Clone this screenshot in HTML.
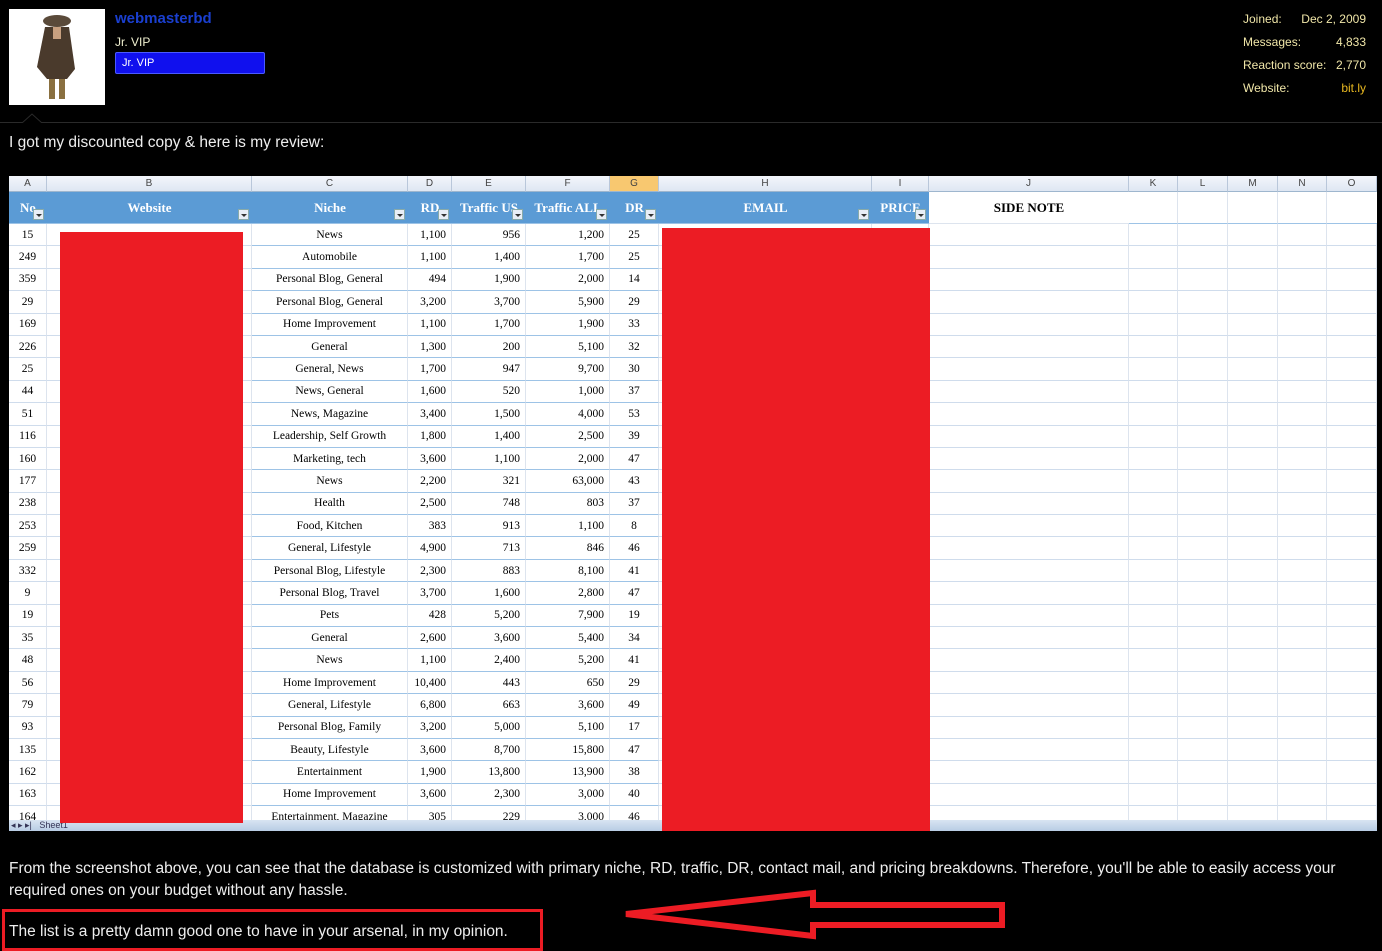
<!DOCTYPE html>
<html><head><meta charset="utf-8"><style>
*{margin:0;padding:0;box-sizing:border-box}
body{width:1382px;height:949px;background:#000;position:relative;overflow:hidden;font-family:"Liberation Sans",sans-serif;color:#fff}
.abs{position:absolute}
.stats{font-size:12px;color:#f0e6a8;line-height:23px}
#sheet{left:9px;top:176px;width:1368px;height:655px;background:#fff;overflow:hidden}
.r{display:flex;height:22.4px}
.r>div{border-right:1px solid #dde4ee;border-bottom:1px solid #cfdcec;font-family:"Liberation Serif",serif;font-size:11.5px;color:#000;display:flex;align-items:center;white-space:nowrap;overflow:hidden}
.c{justify-content:center}.rt{justify-content:flex-end;padding-right:5px}
.ch{display:flex;height:16px;background:linear-gradient(#f3f6fb,#dde6f2)}
.ch>div{border-right:1px solid #b9c7da;border-bottom:1px solid #9eb6ce;font-size:10px;color:#444;display:flex;align-items:center;justify-content:center}
.hd{display:flex;height:32px}
.hd>div{background:#5b9bd5;color:#fff;font-family:"Liberation Serif",serif;font-weight:bold;font-size:13px;display:flex;align-items:center;justify-content:center;position:relative;border-bottom:1px solid #9dc3e6}
.dd{position:absolute;right:3px;bottom:3px;width:11px;height:11px;background:#e8eef6;border:1px solid #8aa;}
.dd:after{content:"";position:absolute;left:2px;top:4px;border:3px solid transparent;border-top:3px solid #333}
.txt{font-size:15.5px;color:#eee}
</style></head><body>
<div class="abs" style="left:9px;top:9px;width:96px;height:96px;background:#fff">
<svg width="96" height="96"><ellipse cx="48" cy="12" rx="14" ry="6" fill="#5a4a3a"/><path d="M36 18 L60 18 L66 60 L58 70 L38 70 L28 58 Z" fill="#4a3a2c"/><path d="M40 70 L46 70 L46 90 L40 90Z M50 70 L56 70 L56 90 L50 90Z" fill="#8a7040"/><path d="M44 18 L52 18 L52 30 L44 30Z" fill="#c8a080"/></svg></div>
<div class="abs" style="left:115px;top:10px;font-size:15px;font-weight:bold;color:#1a3fd0">webmasterbd</div>
<div class="abs" style="left:115px;top:35px;font-size:12px;color:#f0f0d0">Jr. VIP</div>
<div class="abs" style="left:115px;top:52px;width:150px;height:22px;background:#1010ee;border:1px solid #4a5aff;border-radius:2px;font-size:11px;color:#fff;padding:4px 0 0 6px">Jr. VIP</div>
<div class="abs stats" style="left:1243px;top:8px">Joined:<br>Messages:<br>Reaction score:<br>Website:</div>
<div class="abs stats" style="right:16px;top:8px;text-align:right">Dec 2, 2009<br>4,833<br>2,770<br><span style="color:#e8b820">bit.ly</span></div>
<div class="abs" style="left:0;top:122px;width:1382px;height:1px;background:#2a2a2a"></div>
<svg class="abs" style="left:22px;top:112px" width="20" height="11"><path d="M0 11 L10 2 L20 11" fill="#000" stroke="#2a2a2a"/></svg>
<div class="abs txt" style="left:9px;top:134px">I got my discounted copy &amp; here is my review:</div>

<div id="sheet" class="abs">
<div class="ch"><div style="width:38px">A</div><div style="width:205px">B</div><div style="width:156px">C</div><div style="width:44px">D</div><div style="width:74px">E</div><div style="width:84px">F</div><div style="width:49px;background:#f8c870">G</div><div style="width:213px">H</div><div style="width:57px">I</div><div style="width:200px">J</div><div style="width:49px">K</div><div style="width:50px">L</div><div style="width:50px">M</div><div style="width:49px">N</div><div style="width:50px">O</div></div>
<div class="hd"><div style="width:38px">No<span class="dd"></span></div><div style="width:205px">Website<span class="dd"></span></div><div style="width:156px">Niche<span class="dd"></span></div><div style="width:44px">RD<span class="dd"></span></div><div style="width:74px">Traffic US<span class="dd"></span></div><div style="width:84px">Traffic ALL<span class="dd"></span></div><div style="width:49px">DR<span class="dd"></span></div><div style="width:213px">EMAIL<span class="dd"></span></div><div style="width:57px">PRICE<span class="dd"></span></div><div style="width:200px;background:#fff;color:#000;border-bottom:1px solid #dde4ee">SIDE NOTE</div><div style="width:49px;background:#fff;border-right:1px solid #dde4ee"></div><div style="width:50px;background:#fff;border-right:1px solid #dde4ee"></div><div style="width:50px;background:#fff;border-right:1px solid #dde4ee"></div><div style="width:49px;background:#fff;border-right:1px solid #dde4ee"></div><div style="width:50px;background:#fff"></div></div>
<div id="rows"></div>
<div class="abs" style="left:0;top:644px;width:1368px;height:11px;background:linear-gradient(#d8e4f2,#b8cce4);font-size:9px;color:#335;padding-left:2px">◂ ▸ ▸|&nbsp;&nbsp;&nbsp;Sheet1</div>
<div class="abs" style="left:51px;top:56px;width:183px;height:591px;background:#ec1c24"></div>
<div class="abs" style="left:653px;top:52px;width:268px;height:603px;background:#ec1c24"></div>
</div>

<div class="abs txt" style="left:9px;top:858px;line-height:22px;width:1360px">From the screenshot above, you can see that the database is customized with primary niche, RD, traffic, DR, contact mail, and pricing breakdowns. Therefore, you'll be able to easily access your required ones on your budget without any hassle.</div>
<div class="abs txt" style="left:9px;top:923px">The list is a pretty damn good one to have in your arsenal, in my opinion.</div>
<div class="abs" style="left:2px;top:909px;width:541px;height:42px;border:3px solid #ec1c24"></div>
<svg class="abs" style="left:0;top:0" width="1382" height="949"><polygon points="626,914 813,893 813,905 1002,905 1002,925 813,925 813,936" fill="none" stroke="#ec1c24" stroke-width="6" stroke-linejoin="miter"/></svg>

<script>
var d=[["15","News","1,100","956","1,200","25"],["249","Automobile","1,100","1,400","1,700","25"],["359","Personal Blog, General","494","1,900","2,000","14"],["29","Personal Blog, General","3,200","3,700","5,900","29"],["169","Home Improvement","1,100","1,700","1,900","33"],["226","General","1,300","200","5,100","32"],["25","General, News","1,700","947","9,700","30"],["44","News, General","1,600","520","1,000","37"],["51","News, Magazine","3,400","1,500","4,000","53"],["116","Leadership, Self Growth","1,800","1,400","2,500","39"],["160","Marketing, tech","3,600","1,100","2,000","47"],["177","News","2,200","321","63,000","43"],["238","Health","2,500","748","803","37"],["253","Food, Kitchen","383","913","1,100","8"],["259","General, Lifestyle","4,900","713","846","46"],["332","Personal Blog, Lifestyle","2,300","883","8,100","41"],["9","Personal Blog, Travel","3,700","1,600","2,800","47"],["19","Pets","428","5,200","7,900","19"],["35","General","2,600","3,600","5,400","34"],["48","News","1,100","2,400","5,200","41"],["56","Home Improvement","10,400","443","650","29"],["79","General, Lifestyle","6,800","663","3,600","49"],["93","Personal Blog, Family","3,200","5,000","5,100","17"],["135","Beauty, Lifestyle","3,600","8,700","15,800","47"],["162","Entertainment","1,900","13,800","13,900","38"],["163","Home Improvement","3,600","2,300","3,000","40"],["164","Entertainment, Magazine","305","229","3,000","46"]];
var h="";d.forEach(function(r){h+='<div class="r"><div class="c" style="width:38px">'+r[0]+'</div><div style="width:205px"></div><div class="c" style="width:156px;border-bottom-color:#9dc3e6">'+r[1]+'</div><div class="rt" style="width:44px;border-bottom-color:#9dc3e6">'+r[2]+'</div><div class="rt" style="width:74px;border-bottom-color:#9dc3e6">'+r[3]+'</div><div class="rt" style="width:84px;border-bottom-color:#9dc3e6">'+r[4]+'</div><div class="c" style="width:49px;border-bottom-color:#9dc3e6">'+r[5]+'</div><div style="width:213px"></div><div style="width:57px"></div><div style="width:200px"></div><div style="width:49px"></div><div style="width:50px"></div><div style="width:50px"></div><div style="width:49px"></div><div style="width:50px"></div></div>';});
document.getElementById("rows").innerHTML=h;
</script>
</body></html>
